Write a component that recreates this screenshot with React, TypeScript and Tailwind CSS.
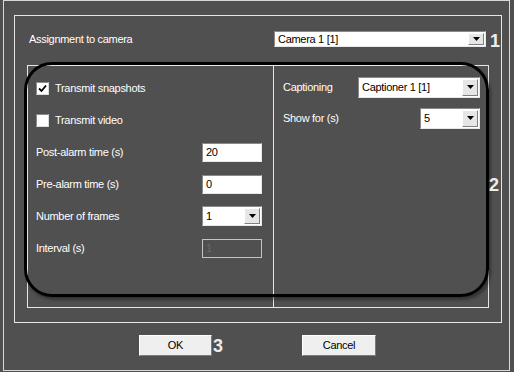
import React from 'react';

function Arrow() {
  return (
    <div className="flex h-full w-[16px] items-center justify-center border border-t-white border-l-white border-b-[#808080] border-r-[#808080] bg-[#e6e6e6]">
      <svg width="7" height="4" viewBox="0 0 7 4">
        <polygon points="0,0 7,0 3.5,4" fill="#000" />
      </svg>
    </div>
  );
}

function Select({ value, className }: { value: string; className: string }) {
  return (
    <div className={`flex items-stretch border border-t-[#8a8a8a] border-l-[#8a8a8a] border-b-[#e8e8e8] border-r-[#e8e8e8] bg-white p-px text-black ${className}`}>
      <span className="flex flex-1 items-center pl-[2px]">{value}</span>
      <Arrow />
    </div>
  );
}

function TextBox({ value, disabled }: { value: string; disabled?: boolean }) {
  return (
    <div
      className={
        disabled
          ? 'flex h-[19px] w-[60px] items-center border border-[#c4c4c4] bg-[#505050] pl-[3px] text-[#6c6c6c]'
          : 'flex h-[19px] w-[60px] items-center border border-t-[#8a8a8a] border-l-[#8a8a8a] border-b-[#e8e8e8] border-r-[#e8e8e8] bg-white pl-[3px] text-black'
      }
    >
      {value}
    </div>
  );
}

function Check({ checked, label }: { checked: boolean; label: string }) {
  return (
    <div className="flex h-[20px] items-center gap-[6px]">
      <div className="flex h-[13px] w-[13px] items-center justify-center border border-t-[#8a8a8a] border-l-[#8a8a8a] border-b-[#dcdcdc] border-r-[#dcdcdc] bg-white">
        {checked && (
          <svg width="9" height="9" viewBox="0 0 9 9">
            <path d="M1 4.5 L3.5 7 L8 1.5" stroke="#000" strokeWidth="1.8" fill="none" />
          </svg>
        )}
      </div>
      <span>{label}</span>
    </div>
  );
}

function Field({ label, children }: { label: string; children: React.ReactNode }) {
  return (
    <div className="flex h-[20px] items-center justify-between">
      <span>{label}</span>
      {children}
    </div>
  );
}

function Mark({ n, className }: { n: string; className: string }) {
  return (
    <span className={`absolute text-[18px] font-bold leading-none text-[#ececec] ${className}`}>{n}</span>
  );
}

export default function App() {
  return (
    <div className="h-[372px] w-[514px] overflow-hidden bg-[#505050] font-['Liberation_Sans',Arial,sans-serif] text-[11px] tracking-[-0.3px] text-white">
      <div className="ml-[3px] h-[371px] w-[507px] border border-[#d8d8d8] px-[10px] pt-[14px]">
        <div className="relative h-[308px] w-[488px] border border-[#e6e6e6] px-[12px] pt-[15px]">
          <div className="mr-[3px] flex h-[16px] items-center justify-between pl-[2px]">
            <span>Assignment to camera</span>
            <div className="relative">
              <Select value="Camera 1 [1]" className="h-[16px] w-[212px]" />
              <Mark n="1" className="left-full top-[1px] ml-[4px]" />
            </div>
          </div>

          <div className="relative mt-[18px] flex h-[243px] w-[462px] border border-[#e6e6e6]">
            <div className="flex w-[246px] flex-col gap-[12px] border-r border-[#e6e6e6] pl-[8px] pr-[11px] pt-[12px]">
              <Check checked label="Transmit snapshots" />
              <Check checked={false} label="Transmit video" />
              <Field label="Post-alarm time (s)">
                <TextBox value="20" />
              </Field>
              <Field label="Pre-alarm time (s)">
                <TextBox value="0" />
              </Field>
              <Field label="Number of frames">
                <Select value="1" className="h-[20px] w-[60px]" />
              </Field>
              <Field label="Interval (s)">
                <TextBox value="1" disabled />
              </Field>
            </div>
            <div className="flex flex-1 flex-col gap-[11px] pl-[9px] pr-[8px] pt-[11px]">
              <Field label="Captioning">
                <Select value="Captioner 1 [1]" className="h-[21px] w-[122px]" />
              </Field>
              <Field label="Show for (s)">
                <Select value="5" className="h-[21px] w-[60px]" />
              </Field>
            </div>

            <div className="pointer-events-none absolute -left-[4px] -top-[4px] h-[235px] w-[465px] rounded-[28px] border-[3px] border-black shadow-[2px_3px_3px_rgba(0,0,0,0.35)]" />
          </div>

          <Mark n="2" className="left-[474px] top-[160px]" />
        </div>

        <div className="mt-[12px] flex text-black">
          <div className="relative ml-[125px]">
            <button className="h-[21px] w-[73px] border border-t-white border-l-white border-b-[#7a7a7a] border-r-[#7a7a7a] bg-[#efefef]">
              OK
            </button>
            <Mark n="3" className="left-full top-[2px] ml-[1px]" />
          </div>
          <button className="ml-[90px] h-[21px] w-[74px] border border-t-white border-l-white border-b-[#7a7a7a] border-r-[#7a7a7a] bg-[#efefef]">
            Cancel
          </button>
        </div>
      </div>
    </div>
  );
}
